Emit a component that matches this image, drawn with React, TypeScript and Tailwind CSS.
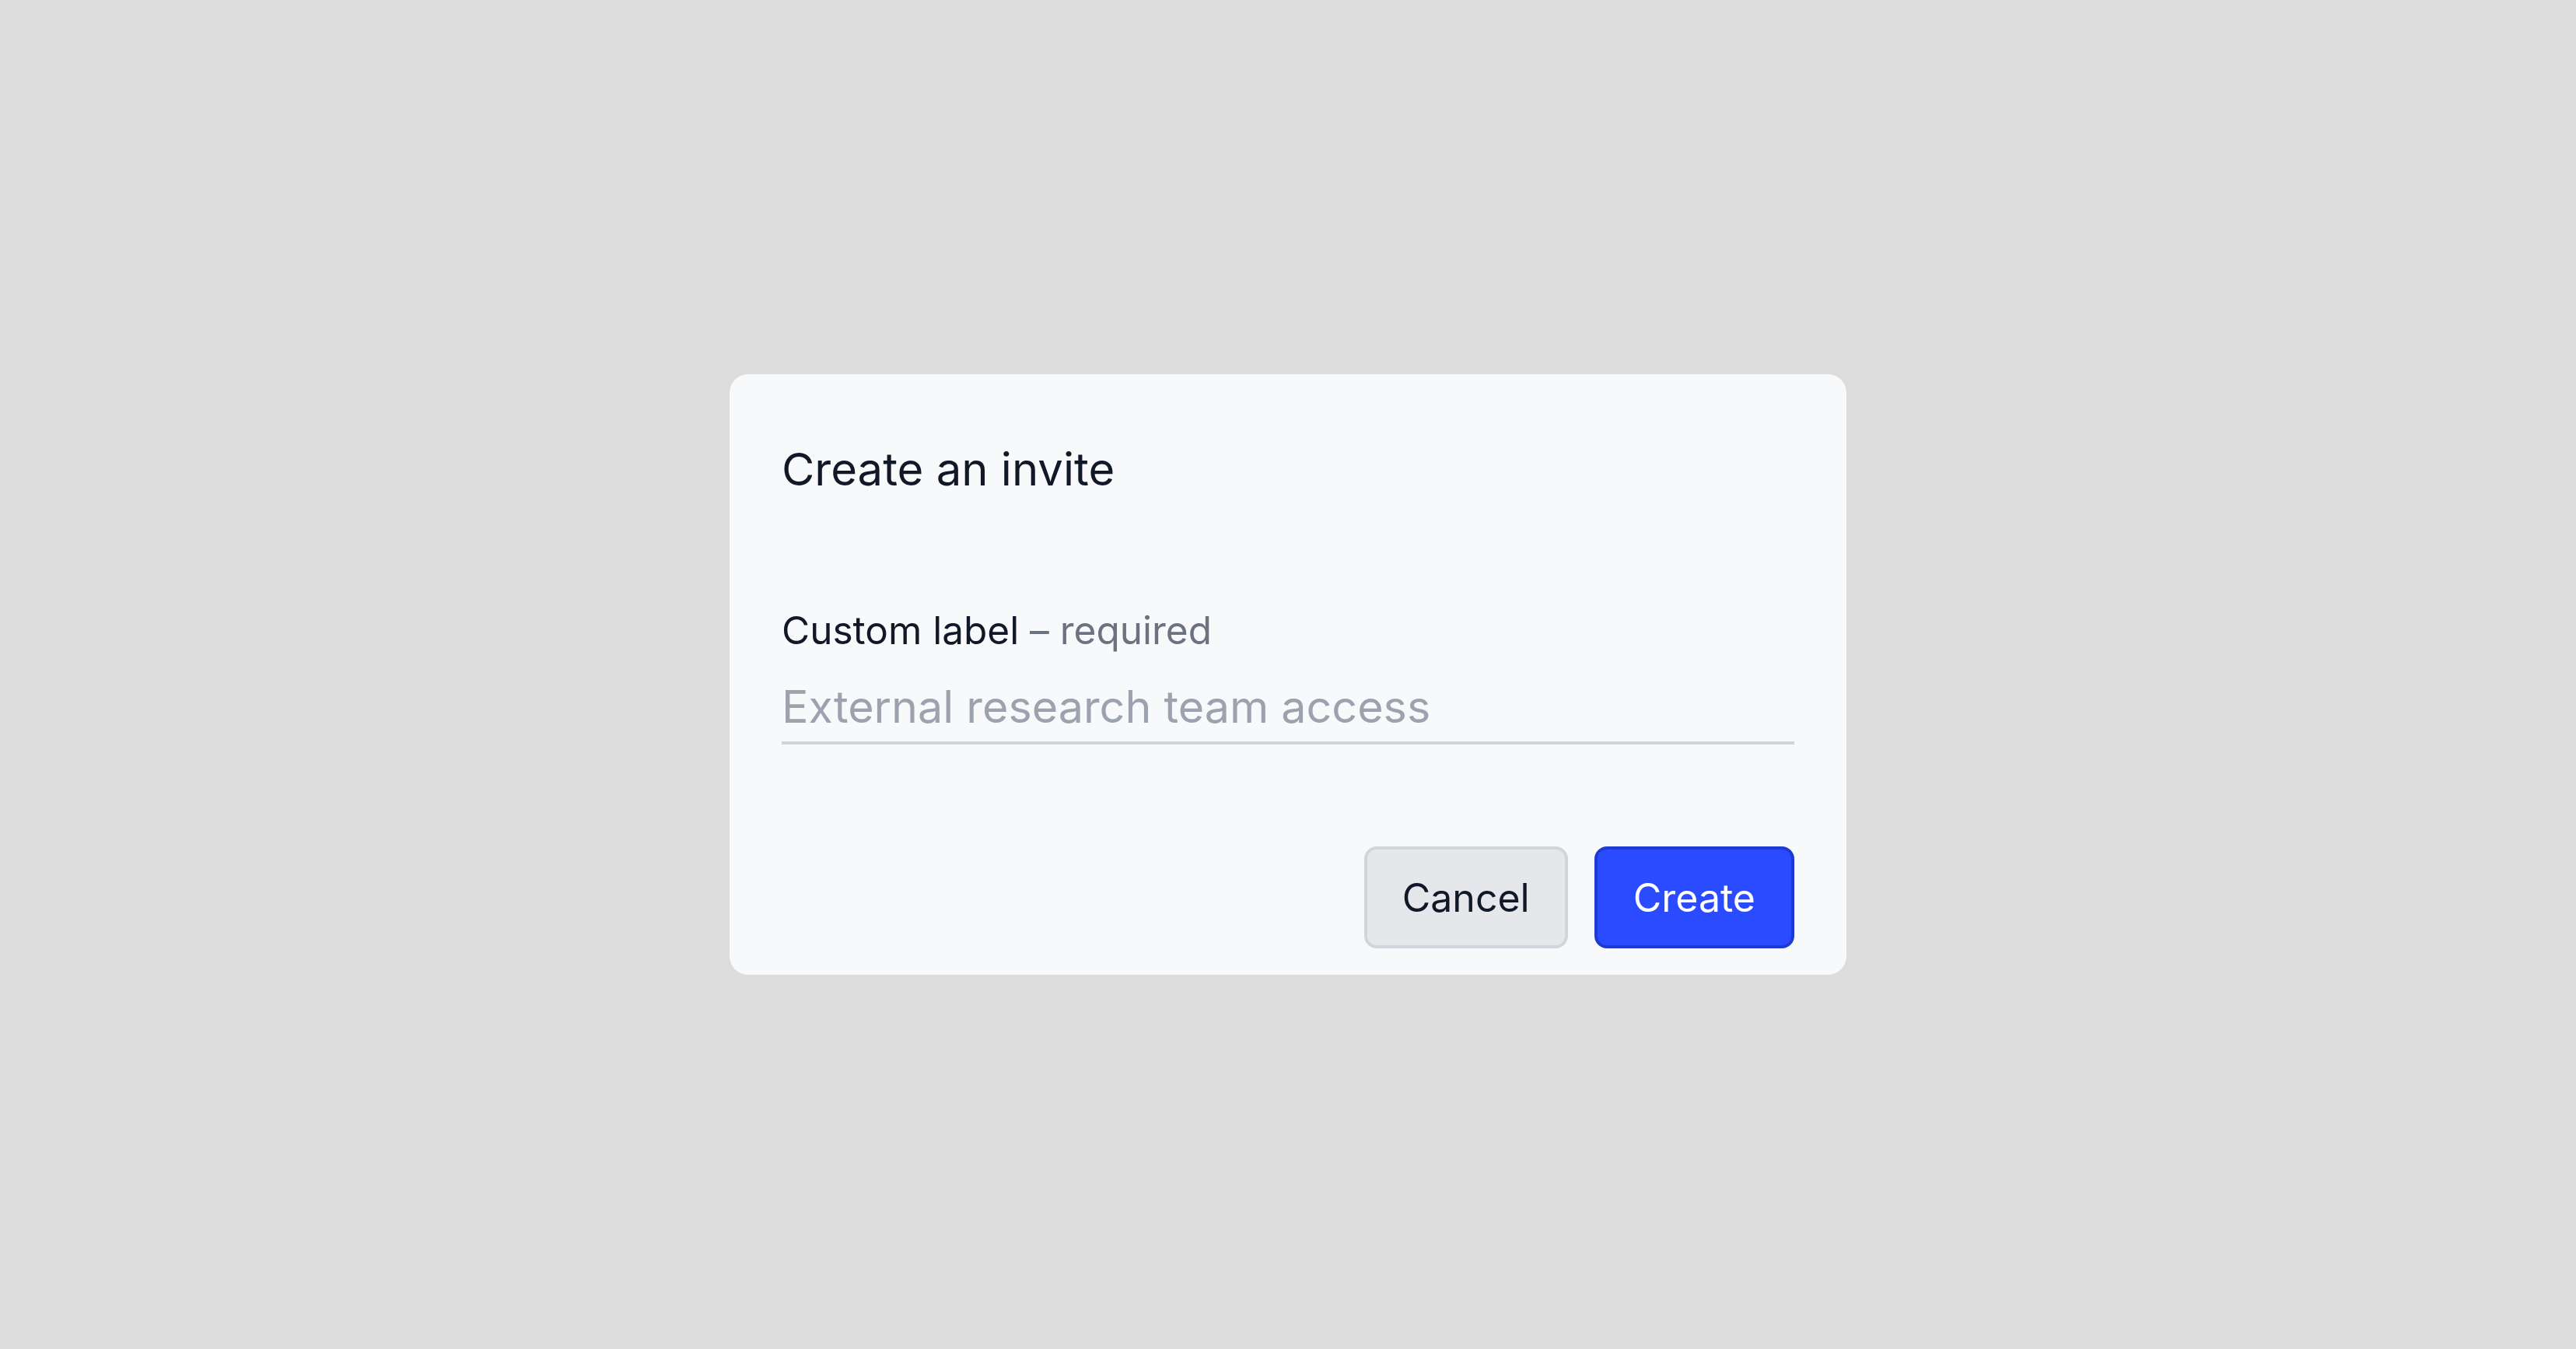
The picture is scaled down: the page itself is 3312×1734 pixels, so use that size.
import { useState } from 'react';

function InviteDialog() {
  const [label, setLabel] = useState('');

  return (
    <div className="w-[1436px] rounded-[24px] bg-[#f8f9fb] px-[67px] pb-[34px] pt-[93px]">
      <h2 className="text-[58px] leading-none font-normal text-[#111827]">
        Create an invite
      </h2>

      <label className="mt-[154px] block text-[49.5px] leading-none text-[#111827]">
        Custom label <span className="text-[#6b7280]">– required</span>
      </label>
      <input
        value={label}
        onChange={(e) => setLabel(e.target.value)}
        placeholder="External research team access"
        className="mt-[44px] block h-[78px] w-full border-b-4 border-[#d1d5db] bg-transparent pb-[16px] text-[57.4px] text-[#111827] outline-none placeholder:text-[#9ca3af]"
      />

      <div className="mt-[131px] flex justify-end gap-[34px]">
        <button className="h-[131px] rounded-[16px] border-4 border-[#d1d5db] bg-[#e5e7eb] px-[45px] text-[50px] leading-none text-[#111827]">
          Cancel
        </button>
        <button className="h-[131px] rounded-[16px] border-4 border-[#1e3bd1] bg-[#2a4bff] px-[46px] text-[50px] leading-none text-white">
          Create
        </button>
      </div>
    </div>
  );
}

export default function App() {
  return (
    <div className="flex min-h-screen items-center justify-center bg-[#dcdcdc] font-['Inter',sans-serif]">
      <InviteDialog />
    </div>
  );
}
